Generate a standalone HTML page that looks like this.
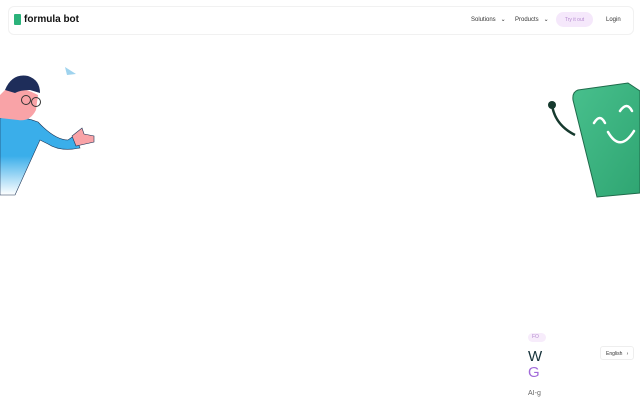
<!DOCTYPE html>
<html><head><style>
body{margin:0;width:640px;height:400px;overflow:hidden;background:#fff;font-family:"Liberation Sans",sans-serif;position:relative}
.nav{position:absolute;left:8px;top:6px;width:624px;height:27px;border:1px solid #f1f1f1;border-radius:6px;background:#fff}
.a{position:absolute;font-size:6px;color:#333;line-height:8px}
</style></head><body>
<div class="nav">
  <div style="position:absolute;left:5px;top:7px;width:7px;height:11px;background:#2bb27a;border-radius:1px"></div>
  <div style="position:absolute;left:15px;top:7px;font-size:10px;line-height:12px;font-weight:bold;color:#111">formula bot</div>
  <div class="a" style="left:462px;top:9px">Solutions &nbsp;&nbsp;⌄</div>
  <div class="a" style="left:506px;top:9px">Products &nbsp;&nbsp;⌄</div>
  <div style="position:absolute;left:547px;top:5px;width:37px;height:15px;border-radius:8px;background:#f5e8fb;color:#b58ad0;font-size:5px;text-align:center;line-height:16px">Try it out</div>
  <div class="a" style="left:597px;top:9px">Login</div>
</div>
<svg style="position:absolute;left:0;top:60px" width="110" height="140">
  <defs><linearGradient id="g" x1="0" y1="0" x2="0" y2="1"><stop offset="0.5" stop-color="#3aaeea"/><stop offset="1" stop-color="#fff"/></linearGradient></defs>
  <polygon points="65,7 76,14 67,15" fill="#9fd3ee"/>
  <path d="M0,58 Q20,55 38,62 Q55,80 68,80 L75,75 L80,88 Q60,92 48,84 L40,80 L15,135 L0,135Z" fill="url(#g)" stroke="#1d3557" stroke-width="0.6"/>
  <path d="M72,76 L82,68 L84,74 L94,76 L94,82 L76,86Z" fill="#f9a3a7" stroke="#1d3557" stroke-width="0.6"/>
  <path d="M5,30 Q20,25 38,35 L36,50 Q30,62 18,60 L0,58 L0,35Z" fill="#f9a3a7"/>
  <path d="M5,30 Q12,13 28,16 Q40,20 40,33 L30,30 Q20,30 15,33 Z" fill="#1e2d5a"/>
  <circle cx="26" cy="40" r="4.5" fill="none" stroke="#333" stroke-width="1"/>
  <circle cx="36" cy="42" r="4.5" fill="none" stroke="#333" stroke-width="1"/>
</svg>
<svg style="position:absolute;left:540px;top:75px" width="100" height="130">
  <defs><linearGradient id="h" x1="0" y1="0" x2="1" y2="1"><stop offset="0" stop-color="#48c08d"/><stop offset="1" stop-color="#2fa572"/></linearGradient></defs>
  <path d="M12,30 Q15,50 35,60" stroke="#163a2e" stroke-width="2.5" fill="none"/>
  <circle cx="12" cy="30" r="4" fill="#163a2e"/>
  <path d="M38,15 Q32,17 33,25 L57,122 L100,118 L100,16 L88,8 Z" fill="url(#h)" stroke="#1f6b4b" stroke-width="1"/>
  <path d="M54,48 Q60,38 65,48 M80,36 Q87,26 92,36 M68,57 Q80,78 94,56" stroke="#fff" stroke-width="2.5" fill="none" stroke-linecap="round"/>
</svg>
<div style="position:absolute;left:528px;top:333px;width:14px;height:9px;border-radius:5px;background:#f7ecfb;font-size:5px;color:#b58ad0;line-height:9px;padding-left:4px">FO</div>
<div style="position:absolute;left:528px;top:348px;font-size:15px;color:#16323a">W</div>
<div style="position:absolute;left:528px;top:364px;font-size:15px;color:#a16ad9">G</div>
<div style="position:absolute;left:528px;top:390px;font-size:7px;color:#666">AI-g</div>
<div style="position:absolute;left:600px;top:346px;width:34px;height:14px;border:1px solid #eee;border-radius:3px;font-size:5px;color:#333;line-height:14px;padding-left:5px;box-sizing:border-box">English &nbsp;&nbsp;›</div>
</body></html>
